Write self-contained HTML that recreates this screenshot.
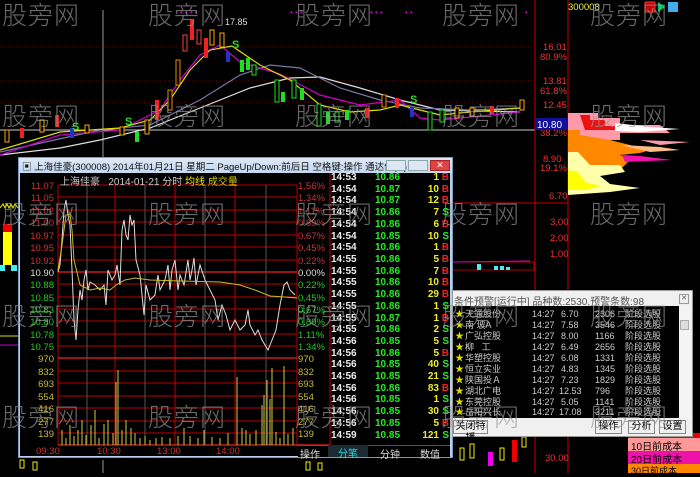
<!DOCTYPE html>
<html><head><meta charset="utf-8"><style>
*{margin:0;padding:0;box-sizing:border-box}
body{width:700px;height:473px;background:#000;overflow:hidden;position:relative;font-family:"Liberation Sans","Noto Sans CJK SC",sans-serif}
.abs{position:absolute}
.wm{position:absolute;font-size:25px;color:rgba(150,150,150,0.7);font-family:"Noto Sans CJK SC","WenQuanYi Zen Hei",sans-serif;font-weight:300;letter-spacing:1px;z-index:50;pointer-events:none}
.t{position:absolute;font-size:10px;white-space:nowrap}
.row{position:absolute;left:331px;width:118px;height:12px;font-size:10px;font-weight:bold;font-family:"Liberation Sans",sans-serif}
.row span{position:absolute}
.btn{position:absolute;top:420px;height:14px;border:1px solid #888;background:#f0f0f0;font-size:10px;text-align:center;line-height:12px;color:#000}
.lr{position:absolute;left:455px;width:225px;height:11px;font-size:9px;line-height:11px;color:#ccc;white-space:nowrap}
.lr span{position:absolute}
</style></head><body>

<svg class="abs" style="left:0;top:0" width="700" height="473">
<line x1="103" y1="10" x2="103" y2="160" stroke="#999" stroke-width="1"/>
<line x1="0" y1="130" x2="535" y2="130" stroke="#ccc" stroke-width="1"/>
<g stroke="#700" stroke-dasharray="1,3">
<line x1="0" y1="47" x2="535" y2="47"/><line x1="0" y1="81" x2="535" y2="81"/><line x1="0" y1="102" x2="535" y2="102"/>
</g>
<line x1="535" y1="0" x2="535" y2="473" stroke="#c00"/>
<line x1="568" y1="0" x2="568" y2="473" stroke="#c00"/>
<line x1="452" y1="203" x2="568" y2="203" stroke="#c00"/>
<polyline fill="none" stroke="#ddd" stroke-width="1.2" points="0,155 60,148 100,140 150,128 200,108 250,88 290,78 320,77 360,88 400,100 440,110 520,112"/>
<polyline fill="none" stroke="#77a" stroke-width="1.2" points="0,152 100,130 150,125 200,100 240,75 270,65 300,68 340,88 380,100 420,108 470,110 520,108"/>
<polyline fill="none" stroke="#c0c" stroke-width="1.2" points="0,155 60,135 120,130 160,110 180,80 200,55 220,45 240,62 260,68 280,74 320,95 360,105 400,100 420,118 440,120 520,112"/>
<polyline fill="none" stroke="#dd0" stroke-width="1.2" points="0,150 60,132 120,128 150,120 170,100 190,70 210,50 232,46 260,65 290,80 320,105 350,112 380,110 400,105 420,110 440,115 470,112 520,108"/>
<g stroke-width="1">
<rect x="183" y="35" width="4" height="16" fill="#000" stroke="#e44"/><rect x="190" y="20" width="4" height="20" fill="#e22"/>
<rect x="197" y="30" width="4" height="14" fill="#000" stroke="#e44"/><rect x="204" y="38" width="4" height="20" fill="#e22"/>
<rect x="210" y="30" width="4" height="15" fill="#000" stroke="#fa0"/><rect x="220" y="33" width="4" height="14" fill="#000" stroke="#fa0"/>
<rect x="226" y="52" width="4" height="10" fill="#23c"/><rect x="176" y="60" width="4" height="25" fill="#000" stroke="#e80"/>
<rect x="168" y="90" width="4" height="20" fill="#000" stroke="#e80"/><rect x="155" y="100" width="4" height="20" fill="#e22"/>
<rect x="240" y="60" width="4" height="12" fill="#2d2"/><rect x="246" y="58" width="4" height="12" fill="#2d2"/><rect x="252" y="65" width="4" height="10" fill="#000" stroke="#2d2"/>
<rect x="275" y="80" width="4" height="22" fill="#000" stroke="#2d2"/><rect x="281" y="92" width="4" height="10" fill="#2d2"/><rect x="292" y="80" width="4" height="18" fill="#000" stroke="#2d2"/>
<rect x="300" y="88" width="4" height="12" fill="#2d2"/><rect x="317" y="104" width="4" height="22" fill="#000" stroke="#2d2"/>
<rect x="326" y="112" width="4" height="12" fill="#2d2"/><rect x="335" y="112" width="4" height="10" fill="#000" stroke="#2d2"/><rect x="345" y="110" width="4" height="10" fill="#2d2"/>
<rect x="365" y="108" width="4" height="10" fill="#e22"/><rect x="382" y="95" width="4" height="12" fill="#000" stroke="#e80"/>
<rect x="395" y="98" width="4" height="10" fill="#e22"/><rect x="410" y="107" width="4" height="10" fill="#23c"/>
<rect x="428" y="112" width="4" height="18" fill="#000" stroke="#2d2"/><rect x="440" y="110" width="4" height="12" fill="#000" stroke="#2d2"/>
<rect x="455" y="108" width="4" height="10" fill="#000" stroke="#fa0"/><rect x="470" y="108" width="4" height="8" fill="#000" stroke="#fa0"/><rect x="490" y="106" width="4" height="8" fill="#e22"/><rect x="520" y="100" width="4" height="10" fill="#000" stroke="#fa0"/>
<rect x="5" y="130" width="4" height="12" fill="#000" stroke="#fa0"/><rect x="20" y="128" width="4" height="10" fill="#e22"/><rect x="40" y="120" width="4" height="12" fill="#000" stroke="#fa0"/>
<rect x="55" y="115" width="4" height="12" fill="#e22"/><rect x="70" y="128" width="4" height="10" fill="#23c"/><rect x="85" y="125" width="4" height="8" fill="#000" stroke="#fa0"/>
<rect x="120" y="127" width="4" height="8" fill="#000" stroke="#fa0"/><rect x="135" y="132" width="4" height="10" fill="#2d2"/><rect x="145" y="120" width="4" height="14" fill="#000" stroke="#fa0"/>
</g>
<text x="225" y="25" fill="#ddd" font-size="9" font-family="Liberation Sans">17.85</text>
<g fill="#2d2" font-size="11" font-weight="bold" font-family="Liberation Sans"><text x="232" y="48">S</text><text x="125" y="125">S</text><text x="72" y="130">S</text><text x="410" y="103">S</text></g>
<g fill="#c0c" font-size="8"><text x="180" y="15">• • • •</text><text x="290" y="15">• • •</text><text x="370" y="15">• • •</text><text x="405" y="15">• •</text><text x="525" y="15">•</text></g>
<g font-size="9.5" font-family="Liberation Sans">
<text x="543" y="50" fill="#e33">16.01</text><text x="540" y="60" fill="#e33">80.9%</text>
<text x="543" y="84" fill="#e33">13.81</text><text x="540" y="94" fill="#e33">61.8%</text>
<text x="543" y="108" fill="#e33">12.45</text>
<text x="540" y="136" fill="#e33">38.2%</text>
<text x="543" y="162" fill="#e33">8.90</text><text x="540" y="171" fill="#e33">19.1%</text>
<text x="549" y="199" fill="#e33">6.70</text>
<text x="550" y="225" fill="#e33">3.00</text><text x="550" y="241" fill="#e33">2.00</text><text x="550" y="257" fill="#e33">1.00</text>
<text x="545" y="461" fill="#e33">30.00</text>
<text x="568" y="10" fill="#ee4">300008</text>
</g>
<rect x="535" y="118" width="33" height="12" fill="#10109a"/>
<text x="537" y="128" fill="#fff" font-size="10" font-family="Liberation Sans">10.80</text>
<rect x="645" y="2" width="10" height="10" fill="#c00" stroke="#e33"/><polygon points="658,2 665,7 658,12" fill="#0c6"/><rect x="668" y="2" width="10" height="10" fill="#4ae"/>
<polygon fill="#f9a" points="568,113 598,113 598,118 620,118 620,125 660,125 670,133 620,133 620,140 568,140"/>
<polygon fill="#e11" points="580,115 590,115 590,120 605,120 605,126 620,126 620,130 585,130"/>
<polygon fill="#fff" points="615,123 650,127 680,129 640,132 615,131"/>
<polygon fill="#f80" points="568,130 580,130 580,135 610,140 630,145 650,150 640,153 620,155 630,160 620,170 600,170 568,172"/>
<polygon fill="#fb8" points="620,145 660,147 680,150 650,152"/>
<polygon fill="#e1a" points="622,155 640,156 672,160 625,162"/>
<polygon fill="#ffa" points="568,152 578,152 590,165 620,165 625,172 600,176 610,184 640,188 610,192 568,195"/>
<polygon fill="#ff0" points="568,170 578,172 585,182 600,186 585,190 568,190"/>
<polygon fill="#f9a" points="640,140 690,142 660,145"/>
<rect x="3" y="232" width="9" height="33" fill="#ff0"/><rect x="3" y="224" width="9" height="8" fill="#e00"/>
<rect x="0" y="265" width="5" height="6" fill="#4ee"/><rect x="11" y="265" width="6" height="6" fill="#4ee"/>
<polyline fill="none" stroke="#ee0" points="0,208 3,204 5,208 7,204 9,208 11,204 13,208 15,204 18,208"/>
<line x1="0" y1="345" x2="18" y2="345" stroke="#c0c"/><line x1="0" y1="336" x2="18" y2="336" stroke="#dd0"/>
<rect x="452" y="262" width="82" height="8" fill="#000" stroke="#a00"/>
<line x1="452" y1="262" x2="530" y2="261" stroke="#c0c"/>
<g fill="#4ee"><rect x="477" y="264" width="4" height="6"/><rect x="494" y="266" width="4" height="4"/><rect x="500" y="266" width="4" height="4"/><rect x="506" y="267" width="4" height="3"/></g>
<g stroke-width="1">
<rect x="460" y="448" width="4" height="12" fill="#000" stroke="#ee0"/><rect x="470" y="444" width="4" height="14" fill="#000" stroke="#ee0"/>
<rect x="488" y="452" width="5" height="14" fill="#e0e"/><rect x="500" y="448" width="4" height="12" fill="#000" stroke="#ee0"/><rect x="512" y="440" width="5" height="22" fill="#e00"/><rect x="522" y="437" width="4" height="10" fill="#000" stroke="#ee0"/>
<rect x="20" y="460" width="4" height="8" fill="#000" stroke="#ee0"/><rect x="33" y="462" width="4" height="8" fill="#000" stroke="#ee0"/><rect x="306" y="462" width="4" height="8" fill="#000" stroke="#ee0"/><rect x="318" y="463" width="4" height="7" fill="#000" stroke="#ee0"/>
</g>
<line x1="103" y1="460" x2="103" y2="473" stroke="#999"/>
</svg>

<div class="abs" style="left:628px;top:438px;width:72px;height:13px;background:#f99;font-size:10px;color:#000;padding-left:3px">10日前成本86.6%</div>
<div class="abs" style="left:628px;top:451px;width:72px;height:13px;background:#e1a;font-size:10px;color:#000;padding-left:3px">20日前成本67.8%</div>
<div class="abs" style="left:628px;top:464px;width:72px;height:9px;background:#f80;font-size:9px;color:#000;padding-left:3px;overflow:hidden">30日前成本62.2%</div>
<div class="abs" style="left:628px;top:433px;width:72px;height:5px;background:#e00"></div>

<div class="abs" style="left:18px;top:157px;width:435px;height:301px;background:#b8d0ec;border:1px solid #7a9cc4"></div>
<div class="abs" style="left:19px;top:158px;width:433px;height:15px;background:linear-gradient(#dde9f7,#c4d8ef)"></div>
<div class="t" style="left:22px;top:159px;font-size:9.5px;color:#111">▣ 上海佳豪(300008) 2014年01月21日 星期二 PageUp/Down:前后日 空格键:操作 通达信(R)</div>
<div class="abs" style="left:386px;top:160px;width:20px;height:11px;background:#dfe8f2;border:1px solid #8aa"></div>
<div class="abs" style="left:408px;top:160px;width:20px;height:11px;background:#dfe8f2;border:1px solid #8aa"></div>
<div class="abs" style="left:430px;top:160px;width:20px;height:11px;background:#d44;border:1px solid #a22;color:#fff;font-size:9px;text-align:center;line-height:9px">✕</div>
<div class="abs" style="left:20px;top:173px;width:430px;height:283px;background:#000"></div>

<svg class="abs" style="left:0;top:0" width="700" height="473">
<g stroke="#b00" stroke-width="1">
<line x1="58" y1="185" x2="297" y2="185"/><line x1="58" y1="197" x2="297" y2="197"/><line x1="58" y1="210" x2="297" y2="210"/><line x1="58" y1="222" x2="297" y2="222"/><line x1="58" y1="235" x2="297" y2="235"/><line x1="58" y1="247" x2="297" y2="247"/><line x1="58" y1="260" x2="297" y2="260"/>
<line x1="58" y1="284" x2="297" y2="284"/><line x1="58" y1="297" x2="297" y2="297"/><line x1="58" y1="309" x2="297" y2="309"/><line x1="58" y1="321" x2="297" y2="321"/><line x1="58" y1="334" x2="297" y2="334"/><line x1="58" y1="346" x2="297" y2="346"/>
<line x1="58" y1="371" x2="297" y2="371"/><line x1="58" y1="383" x2="297" y2="383"/><line x1="58" y1="396" x2="297" y2="396"/><line x1="58" y1="408" x2="297" y2="408"/><line x1="58" y1="421" x2="297" y2="421"/><line x1="58" y1="433" x2="297" y2="433"/>
<line x1="58" y1="185" x2="58" y2="445"/><line x1="115" y1="185" x2="115" y2="445"/><line x1="175" y1="185" x2="175" y2="445"/><line x1="235" y1="185" x2="235" y2="445"/><line x1="297" y1="185" x2="297" y2="445"/>
<line x1="330" y1="173" x2="330" y2="445"/>
</g>
<g stroke="#e22" stroke-width="1.3"><line x1="58" y1="272" x2="297" y2="272"/><line x1="58" y1="358" x2="297" y2="358"/><line x1="58" y1="445" x2="330" y2="445"/></g>
<g stroke="#555" stroke-width="1"><line x1="87" y1="185" x2="87" y2="445"/><line x1="145" y1="185" x2="145" y2="445"/><line x1="205" y1="185" x2="205" y2="445"/><line x1="266" y1="185" x2="266" y2="445"/></g>
<polyline fill="none" stroke="#ddd" stroke-width="1" points="58,272 60,265 62,240 64,210 66,200 68,215 70,225 72,270 74,320 76,340 78,310 80,290 82,300 84,280 86,270 88,290 90,282 95,285 100,290 104,285 106,305 108,270 112,280 115,275 117,265 120,285 122,230 124,220 126,235 128,240 130,215 132,225 134,220 136,260 140,275 144,315 146,285 150,300 155,295 158,275 160,290 165,280 168,265 170,290 172,270 175,260 178,290 180,275 184,285 188,260 190,280 192,270 194,258 196,285 200,265 205,280 210,290 215,300 218,320 222,305 226,315 230,330 235,320 240,330 245,325 248,310 250,325 255,335 258,330 262,340 265,345 268,350 272,340 276,330 280,305 284,285 287,282 290,290 295,295"/>
<polyline fill="none" stroke="#cb2" stroke-width="1" points="58,270 62,245 66,215 70,214 72,230 74,260 80,285 90,290 100,288 110,290 116,285 125,280 135,278 150,280 180,281 220,282 240,285 255,290 270,296 285,297 297,298"/>
<g stroke="#cc4" stroke-width="1">
<line x1="62" y1="445" x2="62" y2="430"/><line x1="66" y1="445" x2="66" y2="438"/><line x1="70" y1="445" x2="70" y2="425"/><line x1="74" y1="445" x2="74" y2="436"/><line x1="78" y1="445" x2="78" y2="430"/><line x1="82" y1="445" x2="82" y2="420"/><line x1="86" y1="445" x2="86" y2="435"/><line x1="91" y1="445" x2="91" y2="425"/><line x1="95" y1="445" x2="95" y2="410"/><line x1="99" y1="445" x2="99" y2="438"/><line x1="104" y1="445" x2="104" y2="424"/><line x1="108" y1="445" x2="108" y2="420"/><line x1="113" y1="445" x2="113" y2="433"/><line x1="116" y1="445" x2="116" y2="382"/><line x1="118" y1="445" x2="118" y2="370"/><line x1="122" y1="445" x2="122" y2="430"/><line x1="126" y1="445" x2="126" y2="420"/><line x1="131" y1="445" x2="131" y2="428"/><line x1="135" y1="445" x2="135" y2="433"/><line x1="140" y1="445" x2="140" y2="438"/><line x1="145" y1="445" x2="145" y2="436"/><line x1="150" y1="445" x2="150" y2="440"/><line x1="156" y1="445" x2="156" y2="438"/><line x1="162" y1="445" x2="162" y2="437"/><line x1="170" y1="445" x2="170" y2="438"/><line x1="178" y1="445" x2="178" y2="436"/><line x1="184" y1="445" x2="184" y2="428"/><line x1="190" y1="445" x2="190" y2="436"/><line x1="198" y1="445" x2="198" y2="438"/><line x1="204" y1="445" x2="204" y2="430"/><line x1="212" y1="445" x2="212" y2="437"/><line x1="220" y1="445" x2="220" y2="438"/><line x1="228" y1="445" x2="228" y2="433"/><line x1="237" y1="445" x2="237" y2="377"/><line x1="242" y1="445" x2="242" y2="428"/><line x1="246" y1="445" x2="246" y2="430"/><line x1="250" y1="445" x2="250" y2="434"/><line x1="256" y1="445" x2="256" y2="430"/><line x1="262" y1="445" x2="262" y2="405"/><line x1="264" y1="445" x2="264" y2="395"/><line x1="267" y1="445" x2="267" y2="380"/><line x1="270" y1="445" x2="270" y2="399"/><line x1="272" y1="445" x2="272" y2="368"/><line x1="276" y1="445" x2="276" y2="432"/><line x1="280" y1="445" x2="280" y2="438"/><line x1="284" y1="445" x2="284" y2="366"/><line x1="288" y1="445" x2="288" y2="434"/><line x1="293" y1="445" x2="293" y2="428"/>
</g>
<g font-size="9.5" font-family="Liberation Sans" text-anchor="end">
<text x="54" y="189" fill="#c33">11.07</text><text x="54" y="201" fill="#c33">11.05</text><text x="54" y="214" fill="#c33">11.02</text><text x="54" y="226" fill="#c33">11.00</text><text x="54" y="239" fill="#c33">10.97</text><text x="54" y="251" fill="#c33">10.95</text><text x="54" y="264" fill="#c33">10.92</text>
<text x="54" y="276" fill="#ddd">10.90</text>
<text x="54" y="288" fill="#2c2">10.88</text><text x="54" y="301" fill="#2c2">10.85</text><text x="54" y="313" fill="#2c2">10.83</text><text x="54" y="325" fill="#2c2">10.80</text><text x="54" y="338" fill="#2c2">10.78</text><text x="54" y="350" fill="#2c2">10.75</text>
<text x="54" y="362" fill="#cb3">970</text><text x="54" y="375" fill="#cb3">832</text><text x="54" y="387" fill="#cb3">693</text><text x="54" y="400" fill="#cb3">554</text><text x="54" y="412" fill="#cb3">416</text><text x="54" y="425" fill="#cb3">277</text><text x="54" y="437" fill="#cb3">139</text>
</g>
<g font-size="9.5" font-family="Liberation Sans">
<text x="298" y="189" fill="#c33">1.56%</text><text x="298" y="201" fill="#c33">1.34%</text><text x="298" y="214" fill="#c33">1.11%</text><text x="298" y="226" fill="#c33">0.89%</text><text x="298" y="239" fill="#c33">0.67%</text><text x="298" y="251" fill="#c33">0.45%</text><text x="298" y="264" fill="#c33">0.22%</text>
<text x="298" y="276" fill="#ddd">0.00%</text>
<text x="298" y="288" fill="#2c2">0.22%</text><text x="298" y="301" fill="#2c2">0.45%</text><text x="298" y="313" fill="#2c2">0.67%</text><text x="298" y="325" fill="#2c2">0.89%</text><text x="298" y="338" fill="#2c2">1.11%</text><text x="298" y="350" fill="#2c2">1.34%</text>
<text x="298" y="362" fill="#cb3">970</text><text x="298" y="375" fill="#cb3">832</text><text x="298" y="387" fill="#cb3">693</text><text x="298" y="400" fill="#cb3">554</text><text x="298" y="412" fill="#cb3">416</text><text x="298" y="425" fill="#cb3">277</text><text x="298" y="437" fill="#cb3">139</text>
<text x="36" y="454" fill="#c33">09:30</text><text x="97" y="454" fill="#c33">10:30</text><text x="157" y="454" fill="#c33">13:00</text><text x="216" y="454" fill="#c33">14:00</text>
</g>
</svg>
<div class="t" style="left:60px;top:173px;color:#ccc;font-size:10px">上海佳豪 &nbsp; 2014-01-21 分时 <span style="color:#ee0">均线</span> <span style="color:#cc0">成交量</span></div>

<div class="row" style="top:172px"><span style="left:0;color:#eee">14:53</span><span style="left:44px;color:#2e2">10.86</span><span style="right:10px;color:#ee2">1</span><span style="right:0;color:#e22">B</span></div>
<div class="row" style="top:184px"><span style="left:0;color:#eee">14:54</span><span style="left:44px;color:#2e2">10.87</span><span style="right:10px;color:#ee2">10</span><span style="right:0;color:#e22">B</span></div>
<div class="row" style="top:195px"><span style="left:0;color:#eee">14:54</span><span style="left:44px;color:#2e2">10.87</span><span style="right:10px;color:#ee2">12</span><span style="right:0;color:#e22">B</span></div>
<div class="row" style="top:207px"><span style="left:0;color:#eee">14:54</span><span style="left:44px;color:#2e2">10.86</span><span style="right:10px;color:#ee2">7</span><span style="right:0;color:#2e2">S</span></div>
<div class="row" style="top:219px"><span style="left:0;color:#eee">14:54</span><span style="left:44px;color:#2e2">10.86</span><span style="right:10px;color:#ee2">6</span><span style="right:0;color:#e22">B</span></div>
<div class="row" style="top:231px"><span style="left:0;color:#eee">14:54</span><span style="left:44px;color:#2e2">10.85</span><span style="right:10px;color:#ee2">10</span><span style="right:0;color:#2e2">S</span></div>
<div class="row" style="top:242px"><span style="left:0;color:#eee">14:54</span><span style="left:44px;color:#2e2">10.86</span><span style="right:10px;color:#ee2">1</span><span style="right:0;color:#e22">B</span></div>
<div class="row" style="top:254px"><span style="left:0;color:#eee">14:55</span><span style="left:44px;color:#2e2">10.86</span><span style="right:10px;color:#ee2">5</span><span style="right:0;color:#e22">B</span></div>
<div class="row" style="top:266px"><span style="left:0;color:#eee">14:55</span><span style="left:44px;color:#2e2">10.86</span><span style="right:10px;color:#ee2">7</span><span style="right:0;color:#e22">B</span></div>
<div class="row" style="top:277px"><span style="left:0;color:#eee">14:55</span><span style="left:44px;color:#2e2">10.86</span><span style="right:10px;color:#ee2">10</span><span style="right:0;color:#e22">B</span></div>
<div class="row" style="top:289px"><span style="left:0;color:#eee">14:55</span><span style="left:44px;color:#2e2">10.86</span><span style="right:10px;color:#ee2">29</span><span style="right:0;color:#e22">B</span></div>
<div class="row" style="top:301px"><span style="left:0;color:#eee">14:55</span><span style="left:44px;color:#2e2">10.86</span><span style="right:10px;color:#ee2">1</span><span style="right:0;color:#2e2">S</span></div>
<div class="row" style="top:313px"><span style="left:0;color:#eee">14:55</span><span style="left:44px;color:#2e2">10.87</span><span style="right:10px;color:#ee2">1</span><span style="right:0;color:#e22">B</span></div>
<div class="row" style="top:324px"><span style="left:0;color:#eee">14:55</span><span style="left:44px;color:#2e2">10.86</span><span style="right:10px;color:#ee2">2</span><span style="right:0;color:#2e2">S</span></div>
<div class="row" style="top:336px"><span style="left:0;color:#eee">14:56</span><span style="left:44px;color:#2e2">10.85</span><span style="right:10px;color:#ee2">5</span><span style="right:0;color:#2e2">S</span></div>
<div class="row" style="top:348px"><span style="left:0;color:#eee">14:56</span><span style="left:44px;color:#2e2">10.86</span><span style="right:10px;color:#ee2">5</span><span style="right:0;color:#e22">B</span></div>
<div class="row" style="top:359px"><span style="left:0;color:#eee">14:56</span><span style="left:44px;color:#2e2">10.85</span><span style="right:10px;color:#ee2">40</span><span style="right:0;color:#2e2">S</span></div>
<div class="row" style="top:371px"><span style="left:0;color:#eee">14:56</span><span style="left:44px;color:#2e2">10.85</span><span style="right:10px;color:#ee2">21</span><span style="right:0;color:#2e2">S</span></div>
<div class="row" style="top:383px"><span style="left:0;color:#eee">14:56</span><span style="left:44px;color:#2e2">10.86</span><span style="right:10px;color:#ee2">83</span><span style="right:0;color:#e22">B</span></div>
<div class="row" style="top:394px"><span style="left:0;color:#eee">14:56</span><span style="left:44px;color:#2e2">10.85</span><span style="right:10px;color:#ee2">1</span><span style="right:0;color:#2e2">S</span></div>
<div class="row" style="top:406px"><span style="left:0;color:#eee">14:56</span><span style="left:44px;color:#2e2">10.85</span><span style="right:10px;color:#ee2">30</span><span style="right:0;color:#2e2">S</span></div>
<div class="row" style="top:418px"><span style="left:0;color:#eee">14:56</span><span style="left:44px;color:#2e2">10.85</span><span style="right:10px;color:#ee2">5</span><span style="right:0;color:#e22">B</span></div>
<div class="row" style="top:430px"><span style="left:0;color:#eee">14:59</span><span style="left:44px;color:#2e2">10.85</span><span style="right:10px;color:#ee2">121</span><span style="right:0;color:#2e2">S</span></div>

<div class="abs" style="left:298px;top:445px;width:152px;height:12px;background:#000;border-top:1px solid #555;font-size:10px;color:#ddd">
<span class="abs" style="left:2px;top:0">操作</span>
<span class="abs" style="left:30px;top:-1px;width:40px;height:12px;background:#1c2a33;color:#2dd;text-align:center">分笔</span>
<span class="abs" style="left:82px;top:0">分钟</span>
<span class="abs" style="left:122px;top:0">数值</span>
</div>

<div class="abs" style="left:452px;top:290px;width:241px;height:147px;background:#f0f0f0;border:1px solid #999"></div>
<div class="t" style="left:454px;top:293px;font-size:10px;color:#555">条件预警[运行中] 品种数:2530,预警条数:98</div>
<div class="abs" style="left:679px;top:294px;width:10px;height:10px;border:1px solid #999;font-size:7px;text-align:center;line-height:8px;color:#555">✕</div>
<div class="abs" style="left:453px;top:306px;width:226px;height:112px;background:#000"></div>
<div class="abs" style="left:679px;top:306px;width:11px;height:112px;background:#f4f4f4"></div>
<div class="abs" style="left:680px;top:320px;width:9px;height:10px;background:#ddd;border:1px solid #aaa"></div>
<div class="lr" style="top:309px"><span style="left:0;color:#dd0">★</span><span style="left:10px">天通股份</span><span style="left:77px">14:27</span><span style="left:106px">6.70</span><span style="left:140px">2306</span><span style="left:170px">阶段选股</span></div>
<div class="lr" style="top:320px"><span style="left:0;color:#dd0">★</span><span style="left:10px">南 玻A</span><span style="left:77px">14:27</span><span style="left:106px">7.58</span><span style="left:140px">3546</span><span style="left:170px">阶段选股</span></div>
<div class="lr" style="top:331px"><span style="left:0;color:#dd0">★</span><span style="left:10px">广弘控股</span><span style="left:77px">14:27</span><span style="left:106px">8.00</span><span style="left:140px">1166</span><span style="left:170px">阶段选股</span></div>
<div class="lr" style="top:342px"><span style="left:0;color:#dd0">★</span><span style="left:10px">柳 &nbsp; 工</span><span style="left:77px">14:27</span><span style="left:106px">6.49</span><span style="left:140px">2656</span><span style="left:170px">阶段选股</span></div>
<div class="lr" style="top:353px"><span style="left:0;color:#dd0">★</span><span style="left:10px">华塑控股</span><span style="left:77px">14:27</span><span style="left:106px">6.08</span><span style="left:140px">1331</span><span style="left:170px">阶段选股</span></div>
<div class="lr" style="top:364px"><span style="left:0;color:#dd0">★</span><span style="left:10px">恒立实业</span><span style="left:77px">14:27</span><span style="left:106px">4.83</span><span style="left:140px">1345</span><span style="left:170px">阶段选股</span></div>
<div class="lr" style="top:375px"><span style="left:0;color:#dd0">★</span><span style="left:10px">陕国投Ａ</span><span style="left:77px">14:27</span><span style="left:106px">7.23</span><span style="left:140px">1829</span><span style="left:170px">阶段选股</span></div>
<div class="lr" style="top:386px"><span style="left:0;color:#dd0">★</span><span style="left:10px">湖北广电</span><span style="left:77px">14:27</span><span style="left:104px">12.53</span><span style="left:140px">796</span><span style="left:170px">阶段选股</span></div>
<div class="lr" style="top:397px"><span style="left:0;color:#dd0">★</span><span style="left:10px">东莞控股</span><span style="left:77px">14:27</span><span style="left:106px">5.05</span><span style="left:140px">1141</span><span style="left:170px">阶段选股</span></div>
<div class="lr" style="top:407px;height:10px;overflow:hidden"><span style="left:0;color:#dd0">★</span><span style="left:10px">岳阳兴长</span><span style="left:77px">14:27</span><span style="left:104px">17.08</span><span style="left:140px">3211</span><span style="left:170px">阶段选股</span></div>
<div class="btn" style="left:453px;width:35px">关闭特播</div>
<div class="btn" style="left:595px;width:27px">操作</div>
<div class="btn" style="left:628px;width:27px">分析</div>
<div class="btn" style="left:659px;width:27px">设置</div>

<div class="wm" style="left:2px;top:-4px">股旁网</div><div class="wm" style="left:148px;top:-4px">股旁网</div><div class="wm" style="left:295px;top:-4px">股旁网</div><div class="wm" style="left:442px;top:-4px">股旁网</div><div class="wm" style="left:590px;top:-4px">股旁网</div>
<div class="wm" style="left:2px;top:97px">股旁网</div><div class="wm" style="left:148px;top:97px">股旁网</div><div class="wm" style="left:295px;top:97px">股旁网</div><div class="wm" style="left:442px;top:97px">股旁网</div><div class="wm" style="left:590px;top:97px">股旁网</div>
<div class="wm" style="left:2px;top:195px">股旁网</div><div class="wm" style="left:148px;top:195px">股旁网</div><div class="wm" style="left:295px;top:195px">股旁网</div><div class="wm" style="left:442px;top:195px">股旁网</div><div class="wm" style="left:590px;top:195px">股旁网</div>
<div class="wm" style="left:2px;top:297px">股旁网</div><div class="wm" style="left:148px;top:297px">股旁网</div><div class="wm" style="left:295px;top:297px">股旁网</div><div class="wm" style="left:442px;top:297px">股旁网</div><div class="wm" style="left:590px;top:297px">股旁网</div>
<div class="wm" style="left:2px;top:398px">股旁网</div><div class="wm" style="left:148px;top:398px">股旁网</div><div class="wm" style="left:295px;top:398px">股旁网</div><div class="wm" style="left:442px;top:398px">股旁网</div><div class="wm" style="left:590px;top:398px">股旁网</div>
</body></html>
